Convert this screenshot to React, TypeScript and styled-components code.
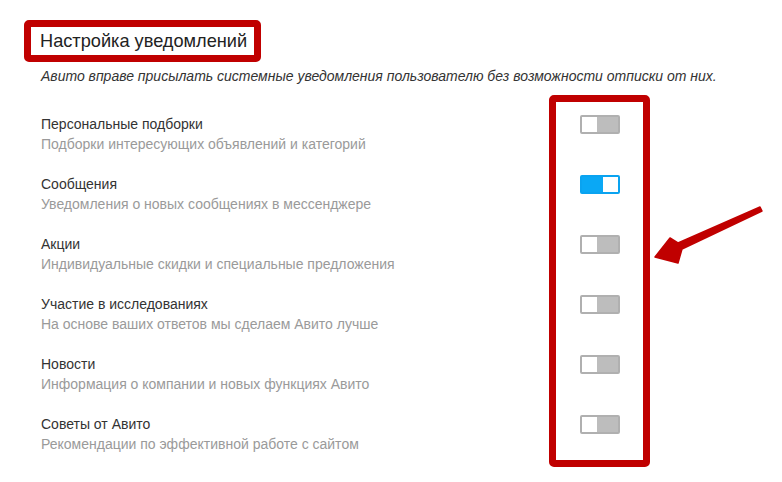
import React, { useState } from 'react'
import styled, { createGlobalStyle } from 'styled-components'

const GlobalStyle = createGlobalStyle`
    html, body {
        margin: 0;
        padding: 0;
        background: #fff;
    }
    body {
        font-family: "Liberation Sans", Arial, sans-serif;
        color: #333;
    }
`

const Page = styled.div`
    position: relative;
    width: 782px;
    height: 482px;
    padding: 20px 0 0 24px;
    box-sizing: border-box;
    overflow: hidden;
`

const TitleMark = styled.div`
    display: inline-block;
    border: 7px solid #c00000;
    border-radius: 5px;
    padding: 0 7px 0 9px;
    height: 28px;
    box-sizing: content-box;
`

const Title = styled.h2`
    margin: 0;
    font-size: 18.2px;
    font-weight: normal;
    line-height: 28px;
    color: #222;
`

const Notice = styled.p`
    margin: 5px 0 0 17px;
    font-size: 14px;
    font-style: italic;
    line-height: 18px;
    color: #333;
`

const List = styled.div`
    margin: 29px 0 0 17px;
    display: flex;
    flex-direction: column;
    gap: 20px;
`

const Row = styled.div`
    display: grid;
    grid-template-columns: 539px 40px;
    align-items: start;
`

const RowName = styled.div`
    font-size: 14px;
    line-height: 20px;
    color: #333;
`

const RowHint = styled.div`
    font-size: 14px;
    line-height: 20px;
    color: #9a9a9a;
`

const Switch = styled.button<{ $on: boolean }>`
    margin-top: 1px;
    width: 40px;
    height: 19px;
    padding: 0;
    border: 2px solid ${p => (p.$on ? '#0aa3f0' : '#b0b0b0')};
    border-radius: 2px;
    background: ${p => (p.$on ? '#0aa8f5' : '#bdbdbd')};
    display: flex;
    justify-content: ${p => (p.$on ? 'flex-end' : 'flex-start')};
    box-sizing: border-box;
    cursor: pointer;
`

const Knob = styled.span`
    width: 15px;
    height: 15px;
    background: #fff;
`

const ColumnMark = styled.div`
    position: absolute;
    left: 549px;
    top: 95px;
    width: 101px;
    height: 372px;
    border: 7px solid #c00000;
    border-radius: 5px;
    box-sizing: border-box;
    pointer-events: none;
`

const Arrow = styled.svg`
    position: absolute;
    left: 640px;
    top: 195px;
    pointer-events: none;
`

const items = [
    { name: 'Персональные подборки', hint: 'Подборки интересующих объявлений и категорий', on: false },
    { name: 'Сообщения', hint: 'Уведомления о новых сообщениях в мессенджере', on: true },
    { name: 'Акции', hint: 'Индивидуальные скидки и специальные предложения', on: false },
    { name: 'Участие в исследованиях', hint: 'На основе ваших ответов мы сделаем Авито лучше', on: false },
    { name: 'Новости', hint: 'Информация о компании и новых функциях Авито', on: false },
    { name: 'Советы от Авито', hint: 'Рекомендации по эффективной работе с сайтом', on: false },
]

const App: React.FC = () => {
    const [state, setState] = useState(items.map(i => i.on))

    return (
        <Page>
            <GlobalStyle />
            <TitleMark>
                <Title>Настройка уведомлений</Title>
            </TitleMark>
            <Notice>
                Авито вправе присылать системные уведомления пользователю без возможности отписки от них.
            </Notice>
            <List>
                {items.map((item, i) =>
                    <Row key={item.name}>
                        <div>
                            <RowName>{item.name}</RowName>
                            <RowHint>{item.hint}</RowHint>
                        </div>
                        <Switch
                            $on={state[i]}
                            onClick={() => setState(s => s.map((v, j) => (j === i ? !v : v)))}
                        >
                            <Knob />
                        </Switch>
                    </Row>
                )}
            </List>
            <ColumnMark />
            <Arrow width="130" height="75" viewBox="0 0 130 75">
                {/* arrow pointing to the switches, tip at (15, 62) */}
                <polygon
                    points="120,12 122,16 42,54 38,68 15,62 30,43 38,48"
                    fill="#c00000"
                    strokeLinejoin="round"
                    stroke="#c00000"
                    strokeWidth="1.5"
                />
            </Arrow>
        </Page>
    )
}

export default App
